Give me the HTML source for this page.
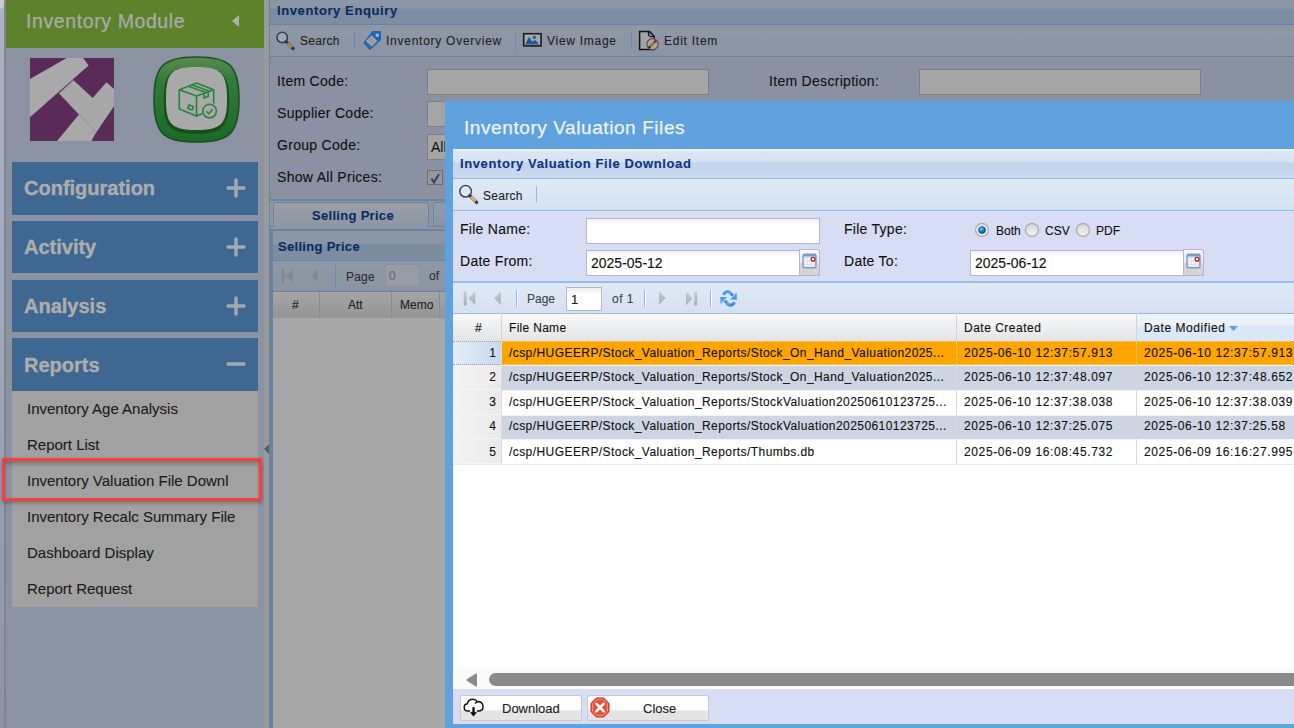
<!DOCTYPE html>
<html><head><meta charset="utf-8">
<style>
*{margin:0;padding:0;box-sizing:border-box}
html,body{width:1294px;height:728px;overflow:hidden;background:#a9b0c3;font-family:"Liberation Sans",sans-serif}
.a{position:absolute}
.t{position:absolute;white-space:nowrap;line-height:1;-webkit-text-stroke:0.12px currentColor}
</style></head><body>
<!-- left strip -->
<div class="a" style="left:0;top:0;width:4px;height:728px;background:linear-gradient(#abb2c6,#a3aabd 40%,#8c93a3)"></div>
<div class="a" style="left:4px;top:0;width:2px;height:728px;background:#7f848e"></div>
<div class="a" style="left:0;top:0;width:4px;height:9px;background:#cdcdcd;border-bottom-right-radius:4px 6px"></div>
<!-- sidebar -->
<div class="a" id="side" style="left:6px;top:0;width:258px;height:728px;background:#8b92a1">
  <div class="a" style="left:0;top:0;width:258px;height:48px;background:#5c822b"></div>
  <div class="t" style="left:20px;top:12px;font-size:19.5px;letter-spacing:0.6px;-webkit-text-stroke:0.25px #aaa;color:#aaa">Inventory Module</div>
  <svg class="a" style="left:226px;top:15px" width="7" height="12"><polygon points="7,0 7,12 0,6" fill="#b0b0b0"/></svg>
</div>
<!-- accordion headers -->
<div class="a" style="left:12px;top:162px;width:246px;height:53px;background:#3e6891"></div>
<div class="a" style="left:12px;top:221px;width:246px;height:52px;background:#3e6891"></div>
<div class="a" style="left:12px;top:280px;width:246px;height:52px;background:#3e6891"></div>
<div class="a" style="left:12px;top:338px;width:246px;height:53px;background:#3e6891"></div>
<div class="t" style="left:24px;top:178px;font-size:20px;font-weight:bold;letter-spacing:0px;-webkit-text-stroke:0.35px #adadad;color:#adadad">Configuration</div>
<div class="t" style="left:24px;top:237px;font-size:20px;font-weight:bold;letter-spacing:0px;-webkit-text-stroke:0.35px #adadad;color:#adadad">Activity</div>
<div class="t" style="left:24px;top:296px;font-size:20px;font-weight:bold;letter-spacing:0px;-webkit-text-stroke:0.35px #adadad;color:#adadad">Analysis</div>
<div class="t" style="left:24px;top:355px;font-size:20px;font-weight:bold;letter-spacing:0px;-webkit-text-stroke:0.35px #adadad;color:#adadad">Reports</div>
<!-- list -->
<div class="a" style="left:12px;top:391px;width:246px;height:216px;background:#a1a1a1"></div>
<div class="t" style="left:27px;top:401px;font-size:15px;color:#1c1c1c">Inventory Age Analysis</div>
<div class="t" style="left:27px;top:437px;font-size:15px;color:#1c1c1c">Report List</div>
<div class="t" style="left:27px;top:473px;font-size:15px;color:#1c1c1c">Inventory Valuation File Downl</div>
<div class="t" style="left:27px;top:509px;font-size:15px;color:#1c1c1c">Inventory Recalc Summary File</div>
<div class="t" style="left:27px;top:545px;font-size:15px;color:#1c1c1c">Dashboard Display</div>
<div class="t" style="left:27px;top:581px;font-size:15px;color:#1c1c1c">Report Request</div>
<!-- red highlight -->
<div class="a" style="left:2px;top:458px;width:260px;height:43px;border:3px solid #fb3d3d;box-shadow:inset 0 5px 5px -2px rgba(0,0,0,0.28),0 2px 4px rgba(0,0,0,0.3)"></div>
<!-- splitter -->
<div class="a" style="left:264px;top:0;width:5px;height:728px;background:#9a9a9a"></div>
<!-- main panel -->
<div class="a" id="main" style="left:269px;top:0;width:1025px;height:728px;background:#8a91a2;border-left:1px solid #6a82a3">
  <!-- header -->
  <div class="a" style="left:0;top:0;width:1025px;height:24px;background:linear-gradient(#8b97a7 0,#8a96a6 8px,#7b8ca1 9px,#7d8da2 24px)"></div>
  <div class="a" style="left:0;top:24px;width:1025px;height:1px;background:#6a83a4"></div>
  <div class="t" style="left:7px;top:4px;font-size:13px;font-weight:bold;letter-spacing:0.6px;color:#0b2c62">Inventory Enquiry</div>
  <!-- toolbar -->
  <div class="a" style="left:0;top:25px;width:1025px;height:31px;background:linear-gradient(#8f98a7,#8b94a3)"></div>
  <div class="a" style="left:0;top:56px;width:1025px;height:1px;background:#6a83a4"></div>
  <div class="t" style="left:30px;top:35px;font-size:12px;letter-spacing:0.3px;color:#232323">Search</div>
  <div class="a" style="left:84px;top:32px;width:1px;height:17px;background:#6b89b5"></div>
  <div class="t" style="left:116px;top:35px;font-size:12px;letter-spacing:0.74px;color:#232323">Inventory Overview</div>
  <div class="a" style="left:245px;top:32px;width:1px;height:17px;background:#6b89b5"></div>
  <div class="t" style="left:277px;top:35px;font-size:12px;letter-spacing:0.73px;color:#232323">View Image</div>
  <div class="a" style="left:361px;top:32px;width:1px;height:17px;background:#6b89b5"></div>
  <div class="t" style="left:394px;top:35px;font-size:12px;letter-spacing:0.75px;color:#232323">Edit Item</div>
  <!-- form -->
  <div class="t" style="left:7px;top:74px;font-size:14px;letter-spacing:0.3px;color:#111">Item Code:</div>
  <div class="t" style="left:7px;top:106px;font-size:14px;letter-spacing:0.3px;color:#111">Supplier Code:</div>
  <div class="t" style="left:7px;top:138px;font-size:14px;letter-spacing:0.3px;color:#111">Group Code:</div>
  <div class="t" style="left:7px;top:170px;font-size:14px;letter-spacing:0.3px;color:#111">Show All Prices:</div>
  <div class="t" style="left:499px;top:74px;font-size:14px;letter-spacing:0.3px;color:#111">Item Description:</div>
  <div class="a" style="left:157px;top:69px;width:282px;height:26px;background:#a5a5a5;border:1px solid #7f7f7f"></div>
  <div class="a" style="left:649px;top:69px;width:282px;height:26px;background:#a5a5a5;border:1px solid #7f7f7f"></div>
  <div class="a" style="left:157px;top:101px;width:282px;height:26px;background:#a5a5a5;border:1px solid #7f7f7f"></div>
  <div class="a" style="left:157px;top:134px;width:282px;height:26px;background:#a5a5a5;border:1px solid #7f7f7f"></div>
  <div class="t" style="left:161px;top:140px;font-size:14px;color:#161616">All</div>
  <div class="a" style="left:157px;top:170px;width:16px;height:15px;background:#979797;border:1px solid #6f6f6f"></div>
  <svg class="a" style="left:159px;top:172px" width="12" height="12"><path d="M2.5,6.5 L5,10.5 L10,2" stroke="#2a4278" stroke-width="2" fill="none"/></svg>
  <!-- form bottom border -->
  <div class="a" style="left:0;top:199px;width:1025px;height:2px;background:#6a83a4"></div>
  <!-- tab strip -->
  <div class="a" style="left:0;top:201px;width:1025px;height:30px;background:#8e96a5"></div>
  <div class="a" style="left:3px;top:202px;width:156px;height:25px;border:1px solid #6a83a4;border-bottom:none;border-radius:4px 4px 0 0;background:linear-gradient(#9a9fa6,#8e96a4)"></div>
  <div class="t" style="left:42px;top:209px;font-size:13px;font-weight:bold;letter-spacing:0.3px;color:#0b2c62">Selling Price</div>
  <div class="a" style="left:163px;top:202px;width:60px;height:25px;border:1px solid #6a83a4;border-bottom:none;border-radius:4px 4px 0 0;background:linear-gradient(#949cab,#8a93a3)"></div>
  <div class="a" style="left:0;top:226px;width:1025px;height:5px;background:#8e96a5;border-top:1px solid #6a83a4;border-bottom:2px solid #6a83a4"></div><div class="a" style="left:4px;top:226px;width:154px;height:3px;background:#8e96a4"></div>
  <!-- grid panel header -->
  <div class="a" style="left:2px;top:231px;width:1023px;height:29px;background:linear-gradient(#8b97a7 0,#8a96a6 13px,#7b8ca1 14px,#7d8da2 29px)"></div>
  <div class="a" style="left:2px;top:260px;width:1023px;height:1px;background:#6a83a4"></div>
  <div class="t" style="left:8px;top:240px;font-size:13px;font-weight:bold;letter-spacing:0.3px;color:#0b2c62">Selling Price</div>
  <!-- paging -->
  <div class="a" style="left:2px;top:261px;width:1023px;height:30px;background:linear-gradient(#8f98a7,#8b94a3)"></div>
  <div class="a" style="left:2px;top:291px;width:1023px;height:1px;background:#6a83a4"></div>
  <div class="t" style="left:76px;top:271px;font-size:12px;letter-spacing:0.2px;color:#2f2f2f">Page</div>
  <div class="a" style="left:115px;top:264px;width:35px;height:23px;border:1px solid #8c929c;background:#979ca6"></div>
  <div class="t" style="left:119px;top:270px;font-size:12px;color:#6d6d6d">0</div>
  <div class="t" style="left:159px;top:270px;font-size:12px;color:#2f2f2f">of</div>
  <div class="a" style="left:65px;top:265px;width:1px;height:22px;background:#6b89b5"></div>
  <!-- grid header -->
  <div class="a" style="left:2px;top:292px;width:1023px;height:26px;background:linear-gradient(#a5a5a5,#959595)"></div>
  <div class="a" style="left:49px;top:292px;width:1px;height:26px;background:#8a8a8a"></div>
  <div class="a" style="left:121px;top:292px;width:1px;height:26px;background:#8a8a8a"></div>
  <div class="a" style="left:169px;top:292px;width:1px;height:26px;background:#8a8a8a"></div>
  <div class="t" style="left:22px;top:299px;font-size:12px;color:#1e1e1e">#</div>
  <div class="t" style="left:78px;top:299px;font-size:12px;color:#1e1e1e">Att</div>
  <div class="t" style="left:130px;top:299px;font-size:12px;color:#1e1e1e">Memo</div>
  <!-- grid body -->
  <div class="a" style="left:2px;top:318px;width:1023px;height:410px;background:#a8a8a8"></div>
  <div class="a" style="left:0;top:231px;width:3px;height:497px;background:#6882a3"></div>
</div>
<!-- modal -->
<div class="a" id="win" style="left:445px;top:101px;width:860px;height:640px;background:#5fa2dd">
  <div class="t" style="left:19px;top:17px;font-size:19px;letter-spacing:0.58px;-webkit-text-stroke:0.25px #eef2f7;color:#eef2f7">Inventory Valuation Files</div>
  <!-- inner panel -->
  <div class="a" style="left:8px;top:48px;width:860px;height:574px;background:#fff">
    <!-- header -->
    <div class="a" style="left:0;top:0;width:860px;height:29px;background:linear-gradient(#f3f7fc 0,#f3f7fc 1px,#dbe6f5 2px,#d6e2f3 13px,#c3d4ee 14px,#c9d9f0 29px)"></div>
    <div class="a" style="left:0;top:29px;width:860px;height:1px;background:#99bbe8"></div>
    <div class="t" style="left:7px;top:8px;font-size:13px;font-weight:bold;letter-spacing:0.6px;color:#0c3781">Inventory Valuation File Download</div>
    <!-- toolbar -->
    <div class="a" style="left:0;top:30px;width:860px;height:31px;background:linear-gradient(#e0e9f6,#d5e1f1)"></div>
    <div class="a" style="left:0;top:61px;width:860px;height:1px;background:#99bbe8"></div>
    <div class="t" style="left:30px;top:41px;font-size:12px;letter-spacing:0.3px;color:#222">Search</div>
    <div class="a" style="left:83px;top:37px;width:1px;height:17px;background:#99bbe8"></div>
    <!-- form -->
    <div class="a" style="left:0;top:62px;width:860px;height:70px;background:#d6ddf5"></div>
    <div class="a" style="left:0;top:132px;width:860px;height:2px;background:#99bbe8"></div>
    <div class="t" style="left:7px;top:73px;font-size:14px;letter-spacing:0.27px;color:#111">File Name:</div>
    <div class="t" style="left:7px;top:105px;font-size:14px;letter-spacing:0.27px;color:#111">Date From:</div>
    <div class="t" style="left:391px;top:73px;font-size:14px;letter-spacing:0.27px;color:#111">File Type:</div>
    <div class="t" style="left:391px;top:105px;font-size:14px;letter-spacing:0.27px;color:#111">Date To:</div>
    <div class="a" style="left:133px;top:69px;width:234px;height:26px;background:linear-gradient(#f0f0f0,#fff 5px);border:1px solid #b5b8c8"></div>
    <div class="a" style="left:133px;top:101px;width:234px;height:26px;background:linear-gradient(#f0f0f0,#fff 5px);border:1px solid #b5b8c8"></div>
    <div class="a" style="left:517px;top:101px;width:234px;height:26px;background:linear-gradient(#f0f0f0,#fff 5px);border:1px solid #b5b8c8"></div>
    <div class="t" style="left:138px;top:107px;font-size:14px;color:#111">2025-05-12</div>
    <div class="t" style="left:522px;top:107px;font-size:14px;color:#111">2025-06-12</div>
    <div class="t" style="left:543px;top:76px;font-size:12px;color:#111">Both</div>
    <div class="t" style="left:592px;top:76px;font-size:12px;color:#111">CSV</div>
    <div class="t" style="left:643px;top:76px;font-size:12px;color:#111">PDF</div>
    <!-- paging -->
    <div class="a" style="left:0;top:134px;width:860px;height:30px;background:linear-gradient(#e0e9f6,#d5e1f1)"></div>
    <div class="a" style="left:0;top:164px;width:860px;height:1px;background:#99bbe8"></div>
    <div class="t" style="left:74px;top:144px;font-size:12px;color:#444">Page</div>
    <div class="a" style="left:113px;top:138px;width:36px;height:24px;background:linear-gradient(#eeeeee,#fff 6px);border:1px solid #b5b8c8"></div>
    <div class="t" style="left:118px;top:144px;font-size:13px;color:#111">1</div>
    <div class="t" style="left:159px;top:144px;font-size:12px;letter-spacing:0.5px;color:#444">of 1</div>
    <!-- grid header -->
    <div class="a" style="left:0;top:165px;width:860px;height:27px;background:linear-gradient(#f9f9f9,#e3e4e6)"></div>
    <div class="a" style="left:0;top:192px;width:860px;height:1px;background:#d0d0d0"></div>
    <div class="t" style="left:22px;top:173px;font-size:12px;color:#111">#</div>
    <div class="t" style="left:56px;top:173px;font-size:12px;letter-spacing:0.3px;color:#111">File Name</div>
    <div class="t" style="left:511px;top:173px;font-size:12px;letter-spacing:0.5px;color:#111">Date Created</div>
<!--ROWS-->
<div class="a" style="left:48px;top:192px;width:812px;height:24px;background:#ffa500;border-top:1px dotted #f3d79c;border-bottom:1px dotted #f3d79c"></div>
<div class="a" style="left:0;top:192px;width:48px;height:24px;background:linear-gradient(90deg,#e3ecf8,#c9d9ef);border-top:1px dotted #a0a0a0;border-bottom:1px dotted #a0a0a0"></div>
<div class="t" style="right:817px;top:198px;font-size:12px;color:#111">1</div>
<div class="t" style="left:56px;top:198px;font-size:12px;letter-spacing:0.43px;color:#111">/csp/HUGEERP/Stock_Valuation_Reports/Stock_On_Hand_Valuation2025...</div>
<div class="t" style="left:511px;top:198px;font-size:12px;letter-spacing:0.62px;color:#111">2025-06-10 12:37:57.913</div>
<div class="t" style="left:691px;top:198px;font-size:12px;letter-spacing:0.62px;color:#111">2025-06-10 12:37:57.913</div>
<div class="a" style="left:48px;top:216px;width:812px;height:25px;background:#cdd5e3;border-top:1px solid #eef1f6"></div>
<div class="a" style="left:0;top:216px;width:48px;height:25px;background:linear-gradient(90deg,#f3f3f3,#eaeaea);border-bottom:1px solid #f6f6f6"></div>
<div class="t" style="right:817px;top:222px;font-size:12px;color:#111">2</div>
<div class="t" style="left:56px;top:222px;font-size:12px;letter-spacing:0.43px;color:#111">/csp/HUGEERP/Stock_Valuation_Reports/Stock_On_Hand_Valuation2025...</div>
<div class="t" style="left:511px;top:222px;font-size:12px;letter-spacing:0.62px;color:#111">2025-06-10 12:37:48.097</div>
<div class="t" style="left:691px;top:222px;font-size:12px;letter-spacing:0.62px;color:#111">2025-06-10 12:37:48.652</div>
<div class="a" style="left:48px;top:241px;width:812px;height:25px;background:#ffffff;border-top:1px solid #f4f4f4"></div>
<div class="a" style="left:0;top:241px;width:48px;height:25px;background:linear-gradient(90deg,#f3f3f3,#eaeaea);border-bottom:1px solid #f6f6f6"></div>
<div class="t" style="right:817px;top:247px;font-size:12px;color:#111">3</div>
<div class="t" style="left:56px;top:247px;font-size:12px;letter-spacing:0.43px;color:#111">/csp/HUGEERP/Stock_Valuation_Reports/StockValuation20250610123725...</div>
<div class="t" style="left:511px;top:247px;font-size:12px;letter-spacing:0.62px;color:#111">2025-06-10 12:37:38.038</div>
<div class="t" style="left:691px;top:247px;font-size:12px;letter-spacing:0.62px;color:#111">2025-06-10 12:37:38.039</div>
<div class="a" style="left:48px;top:266px;width:812px;height:24px;background:#cdd5e3;border-top:1px solid #eef1f6"></div>
<div class="a" style="left:0;top:266px;width:48px;height:24px;background:linear-gradient(90deg,#f3f3f3,#eaeaea);border-bottom:1px solid #f6f6f6"></div>
<div class="t" style="right:817px;top:271px;font-size:12px;color:#111">4</div>
<div class="t" style="left:56px;top:271px;font-size:12px;letter-spacing:0.43px;color:#111">/csp/HUGEERP/Stock_Valuation_Reports/StockValuation20250610123725...</div>
<div class="t" style="left:511px;top:271px;font-size:12px;letter-spacing:0.62px;color:#111">2025-06-10 12:37:25.075</div>
<div class="t" style="left:691px;top:271px;font-size:12px;letter-spacing:0.62px;color:#111">2025-06-10 12:37:25.58</div>
<div class="a" style="left:48px;top:290px;width:812px;height:25px;background:#ffffff;border-top:1px solid #f4f4f4"></div>
<div class="a" style="left:0;top:290px;width:48px;height:25px;background:linear-gradient(90deg,#f3f3f3,#eaeaea);border-bottom:1px solid #f6f6f6"></div>
<div class="t" style="right:817px;top:297px;font-size:12px;color:#111">5</div>
<div class="t" style="left:56px;top:297px;font-size:12px;letter-spacing:0.43px;color:#111">/csp/HUGEERP/Stock_Valuation_Reports/Thumbs.db</div>
<div class="t" style="left:511px;top:297px;font-size:12px;letter-spacing:0.62px;color:#111">2025-06-09 16:08:45.732</div>
<div class="t" style="left:691px;top:297px;font-size:12px;letter-spacing:0.62px;color:#111">2025-06-09 16:16:27.995</div>
<!--/ROWS-->
    <!-- bottom toolbar -->
    <div class="a" style="left:0;top:540px;width:860px;height:35px;background:#d6ddf5"></div>
  </div>
</div>
<!-- ICONS LAYER (page coords) -->
<!-- accordion plus/minus -->
<svg class="a" style="left:226px;top:178px" width="20" height="20" viewBox="0 0 20 20"><path d="M10,2 V18 M2,10 H18" stroke="#a3a9b0" stroke-width="3.4" stroke-linecap="round"/></svg>
<svg class="a" style="left:226px;top:237px" width="20" height="20" viewBox="0 0 20 20"><path d="M10,2 V18 M2,10 H18" stroke="#a3a9b0" stroke-width="3.4" stroke-linecap="round"/></svg>
<svg class="a" style="left:226px;top:296px" width="20" height="20" viewBox="0 0 20 20"><path d="M10,2 V18 M2,10 H18" stroke="#a3a9b0" stroke-width="3.4" stroke-linecap="round"/></svg>
<svg class="a" style="left:226px;top:354px" width="20" height="20" viewBox="0 0 20 20"><path d="M2,10 H18" stroke="#a3a9b0" stroke-width="3.4" stroke-linecap="round"/></svg>
<!-- logo 1 -->
<svg class="a" style="left:30px;top:58px" width="84" height="83" viewBox="73 60 612 602" preserveAspectRatio="none">
  <rect x="73" y="60" width="612" height="602" fill="#5a2b58"/>
  <path d="M73,212 L340,60 L460,60 L500,115 L73,490 Z" fill="#a9a9a9"/>
  <path d="M285,318 L390,222 L530,350 L630,235 L685,285 L685,410 L555,600 L430,470 Z" fill="#a8a8a8"/>
  <path d="M270,662 L430,470 L555,600 L520,662 Z" fill="#a9a9a9"/>
  <path d="M285,318 L390,222" stroke="#8f8f8f" stroke-width="8"/>
  <path d="M430,470 L555,600" stroke="#9a9a9a" stroke-width="6"/>
</svg>
<!-- logo 2 -->
<svg class="a" style="left:152px;top:55px" width="89" height="89" viewBox="0 0 89 89">
  <defs>
    <radialGradient id="gr" cx="0.5" cy="0.45" r="0.6"><stop offset="0.6" stop-color="#2f7a36"/><stop offset="0.85" stop-color="#1e6a2a"/><stop offset="1" stop-color="#175a22"/></radialGradient>
    <linearGradient id="gr2" x1="0" x2="0" y1="0" y2="1"><stop offset="0" stop-color="#5a8a50"/><stop offset="0.3" stop-color="#2f7a36"/><stop offset="1" stop-color="#1c6a28"/></linearGradient>
  </defs>
  <path d="M44.5,2 C78,2 87,11 87,44.5 C87,78 78,87 44.5,87 C11,87 2,78 2,44.5 C2,11 11,2 44.5,2 Z" fill="url(#gr2)" stroke="#1f4f24" stroke-width="1.6"/>
  <path d="M44.5,12 C68,12 76,17 76,44.5 C76,70 68,76 44.5,76 C19,76 13,70 13,44.5 C13,17 19,12 44.5,12 Z" fill="#0f3a14" opacity="0.6" transform="translate(44.5 46) scale(1.04) translate(-44.5 -44.5)"/>
  <path d="M44.5,12 C69,12 75,18 75,44.5 C75,69 69,75 44.5,75 C19,75 14,69 14,44.5 C14,18 19,12 44.5,12 Z" fill="#a9a9a9"/>
  <g fill="none" stroke="#28843a" stroke-width="1.6" stroke-linejoin="round">
    <path d="M27.3,34.8 L44.5,28 L61.7,34.8 L44.5,41 Z"/>
    <path d="M27.3,34.8 L27.3,54.1 L44.5,60.9 L44.5,41"/>
    <path d="M61.7,34.8 L61.7,48.6"/>
    <path d="M37,31.4 L54.1,37.6 M40.4,30 L57.6,36.2"/>
    <path d="M52,38.3 L52,43 L56.2,41.6 L56.2,36.8"/>
    <rect x="36.3" y="50.6" width="4.7" height="3.6" transform="rotate(22 38.6 52.4)"/>
    <path d="M44.5,60.9 L50.5,58.6"/>
    <circle cx="57.6" cy="56.1" r="6.8"/>
    <path d="M54.2,56.2 L56.7,58.7 L61,54"/>
  </g>
</svg>

<!-- main toolbar search icon (masked) -->
<svg class="a" style="left:274px;top:30px" width="22" height="22" viewBox="0 0 22 22">
  <circle cx="8.2" cy="7.4" r="5.2" fill="#a3a7ae" stroke="#34405a" stroke-width="1.6"/>
  <line x1="12.2" y1="11.6" x2="19.2" y2="18.6" stroke="#2c3650" stroke-width="3.2" stroke-linecap="round"/>
  <line x1="13.6" y1="13" x2="17.9" y2="17.3" stroke="#b08a58" stroke-width="2.6" stroke-linecap="butt"/>
</svg>
<!-- tag icon -->
<svg class="a" style="left:362px;top:30px" width="21" height="21" viewBox="0 0 21 21">
  <path d="M10.3,1 L19,1 L19,10.1 L8.6,19.6 Q8,20.2 7.4,19.6 L1.6,13.6 Q1,13 1.6,12.4 Z" fill="#1d66b8"/>
  <rect x="5.6" y="7" width="8" height="8" transform="rotate(45 9.6 11)" fill="#a2a2a2"/>
  <line x1="7" y1="9.5" x2="11" y2="13.5" stroke="#8a8a8a" stroke-width="0.8"/>
  <line x1="8.2" y1="8.3" x2="12.2" y2="12.3" stroke="#8a8a8a" stroke-width="0.8"/>
  <rect x="13.6" y="3.6" width="3.2" height="3.2" fill="#b4b4b4"/>
</svg>
<!-- view image icon -->
<svg class="a" style="left:522px;top:32px" width="21" height="16" viewBox="0 0 21 16">
  <rect x="1.7" y="1.7" width="17.4" height="12.2" fill="#a6a7a9" stroke="#1c1c1c" stroke-width="1.6"/>
  <path d="M3.2,12.6 L6.6,5.6 Q7,5 7.5,5.6 L10,9.4 L12.2,8.4 Q13,8.1 13.8,8.6 L17.2,12.6 Z" fill="#1d5898"/>
  <circle cx="12.3" cy="5.3" r="1.6" fill="#1d5898"/>
</svg>
<!-- edit icon -->
<svg class="a" style="left:638px;top:30px" width="22" height="21" viewBox="0 0 22 21">
  <path d="M1.6,1.6 L11.5,1.6 L16.2,6.2 L16.2,19.6 L1.6,19.6 Z" fill="#a4a5a8" stroke="#141414" stroke-width="1.5"/>
  <path d="M11,1.6 Q9.5,4.5 11.5,6 Q13.5,7.2 16.2,6.2" fill="none" stroke="#141414" stroke-width="1.3"/>
  <circle cx="14.5" cy="14.2" r="5.6" fill="#a8a8aa" stroke="#5d4c4e" stroke-width="1.2"/>
  <line x1="11.2" y1="17.4" x2="16.6" y2="12" stroke="#9a6a1e" stroke-width="2.2"/>
  <circle cx="17.1" cy="11.5" r="1.5" fill="#b51d1d"/>
  <line x1="10.8" y1="17.8" x2="12" y2="16.6" stroke="#141414" stroke-width="2"/>
</svg>
<!-- paging icons main (masked) -->
<svg class="a" style="left:280px;top:268px" width="40" height="16" viewBox="0 0 40 16">
  <rect x="1.5" y="1" width="3" height="14" fill="#83888f"/>
  <path d="M13,1 L13,15 L6,8 Z" fill="#83888f"/>
  <path d="M38,1 L38,14 L31,7.5 Z" fill="#83888f"/>
</svg>
<!-- splitter collapse triangle -->
<svg class="a" style="left:264px;top:444px" width="5" height="10"><path d="M5,0 L5,10 L0,5 Z" fill="#5c5c5c"/></svg>
<!-- modal toolbar search icon -->
<svg class="a" style="left:457px;top:183px" width="22" height="22" viewBox="0 0 22 22">
  <circle cx="8.6" cy="8.3" r="5.8" fill="#e3e6ec" stroke="#3b4a6b" stroke-width="1.5"/>
  <line x1="12.8" y1="12.6" x2="19.6" y2="19.4" stroke="#34415e" stroke-width="3.4" stroke-linecap="round"/>
  <line x1="14" y1="13.8" x2="18.4" y2="18.2" stroke="#e3b06a" stroke-width="3"/>
</svg>
<!-- modal paging icons -->
<svg class="a" style="left:462px;top:290px" width="42" height="17" viewBox="0 0 42 17">
  <defs><linearGradient id="pg" x1="0" x2="0" y1="0" y2="1"><stop offset="0" stop-color="#c9ccd1"/><stop offset="1" stop-color="#a9adb3"/></linearGradient></defs>
  <rect x="1.7" y="1.3" width="3" height="14.3" rx="0.8" fill="url(#pg)"/>
  <path d="M13.3,1.3 L13.3,15.3 L6.5,8.3 Z" fill="url(#pg)"/>
  <path d="M39,1.3 L39,15 L32,8.2 Z" fill="url(#pg)"/>
</svg>
<svg class="a" style="left:657px;top:290px" width="42" height="17" viewBox="0 0 42 17">
  <path d="M2,1.3 L2,14.5 L9,8 Z" fill="url(#pg)"/>
  <path d="M29,1.5 L29,15.5 L35.4,8.5 Z" fill="url(#pg)"/>
  <rect x="37.2" y="1.5" width="3" height="14" rx="0.8" fill="url(#pg)"/>
</svg>
<!-- separators modal paging -->
<div class="a" style="left:516px;top:290px;width:1px;height:17px;background:#8cb6ef;box-shadow:1px 0 0 #fff"></div>
<div class="a" style="left:644px;top:290px;width:1px;height:17px;background:#8cb6ef;box-shadow:1px 0 0 #fff"></div>
<div class="a" style="left:710px;top:290px;width:1px;height:17px;background:#8cb6ef;box-shadow:1px 0 0 #fff"></div>
<!-- refresh icon -->
<svg class="a" style="left:716px;top:286px" width="26" height="26" viewBox="0 0 728 728">
  <defs><linearGradient id="rf" x1="0" x2="1" y1="0" y2="1"><stop offset="0" stop-color="#3a8fe6"/><stop offset="0.5" stop-color="#5aaaf2"/><stop offset="1" stop-color="#2a7bd8"/></linearGradient></defs>
  <path d="M205,250 Q320,70 470,265" fill="none" stroke="url(#rf)" stroke-width="85"/>
  <path d="M390,375 L580,375 L580,185 Z" fill="url(#rf)"/>
  <path d="M250,410 Q390,640 520,450" fill="none" stroke="url(#rf)" stroke-width="85"/>
  <path d="M125,305 L315,305 L125,505 Z" fill="url(#rf)"/>
</svg>
<!-- calendar triggers -->
<div class="a" style="left:799px;top:249px;width:21px;height:27px;border:1px solid #b5b8c8;border-radius:0 3px 3px 0;background:linear-gradient(#f7f7f7,#ececec 50%,#d8d8d8 51%,#d4d4d4)"></div>
<div class="a" style="left:1183px;top:249px;width:21px;height:27px;border:1px solid #b5b8c8;border-radius:0 3px 3px 0;background:linear-gradient(#f7f7f7,#ececec 50%,#d8d8d8 51%,#d4d4d4)"></div>
<svg class="a" style="left:802px;top:253px" width="15" height="16" viewBox="0 0 15 16">
  <rect x="1" y="1.2" width="13" height="13.6" rx="1.5" fill="#dcdde0" stroke="#7b9cca" stroke-width="1.4"/>
  <rect x="1" y="1.2" width="13" height="2.2" fill="#7b9cca"/>
  <g fill="#f4f4f4"><rect x="2.6" y="5" width="2.6" height="2.6"/><rect x="6.2" y="5" width="2.6" height="2.6"/><rect x="2.6" y="8.6" width="2.6" height="2.6"/><rect x="6.2" y="8.6" width="2.6" height="2.6"/><rect x="9.8" y="8.6" width="2.6" height="2.6"/><rect x="2.6" y="12" width="2.6" height="1.6"/><rect x="6.2" y="12" width="2.6" height="1.6"/><rect x="9.8" y="12" width="2.6" height="1.6"/></g>
  <circle cx="11.1" cy="6.3" r="1.9" fill="#fff" stroke="#b01c28" stroke-width="1.3"/>
</svg>
<svg class="a" style="left:1186px;top:253px" width="15" height="16" viewBox="0 0 15 16">
  <rect x="1" y="1.2" width="13" height="13.6" rx="1.5" fill="#dcdde0" stroke="#7b9cca" stroke-width="1.4"/>
  <rect x="1" y="1.2" width="13" height="2.2" fill="#7b9cca"/>
  <g fill="#f4f4f4"><rect x="2.6" y="5" width="2.6" height="2.6"/><rect x="6.2" y="5" width="2.6" height="2.6"/><rect x="2.6" y="8.6" width="2.6" height="2.6"/><rect x="6.2" y="8.6" width="2.6" height="2.6"/><rect x="9.8" y="8.6" width="2.6" height="2.6"/><rect x="2.6" y="12" width="2.6" height="1.6"/><rect x="6.2" y="12" width="2.6" height="1.6"/><rect x="9.8" y="12" width="2.6" height="1.6"/></g>
  <circle cx="11.1" cy="6.3" r="1.9" fill="#fff" stroke="#b01c28" stroke-width="1.3"/>
</svg>
<!-- radios -->
<svg class="a" style="left:974px;top:222px" width="16" height="16" viewBox="0 0 16 16">
  <defs><radialGradient id="rb" cx="0.4" cy="0.35" r="0.6"><stop offset="0" stop-color="#6fd0ff"/><stop offset="0.5" stop-color="#1f8fd0"/><stop offset="1" stop-color="#0d4f86"/></radialGradient>
  <linearGradient id="rg" x1="0" x2="0" y1="0" y2="1"><stop offset="0" stop-color="#d6d6d6"/><stop offset="1" stop-color="#f4f4f4"/></linearGradient></defs>
  <circle cx="8" cy="8" r="6.5" fill="#ececec" stroke="#b0b0b0" stroke-width="1.4"/>
  <circle cx="8" cy="8" r="3.5" fill="url(#rb)" stroke="#0f4a7e" stroke-width="0.6"/>
</svg>
<svg class="a" style="left:1024px;top:222px" width="16" height="16" viewBox="0 0 16 16">
  <circle cx="8" cy="8" r="6.5" fill="url(#rg)" stroke="#b0b0b0" stroke-width="1.4"/>
</svg>
<svg class="a" style="left:1075px;top:222px" width="16" height="16" viewBox="0 0 16 16">
  <circle cx="8" cy="8" r="6.5" fill="url(#rg)" stroke="#b0b0b0" stroke-width="1.4"/>
</svg>
<!-- modal grid column lines -->
<div class="a" style="left:501px;top:313px;width:1px;height:28px;background:#d5d5d5"></div>
<div class="a" style="left:956px;top:313px;width:1px;height:28px;background:#d5d5d5"></div>
<div class="a" style="left:1136px;top:313px;width:1px;height:28px;background:#d5d5d5"></div>
<div class="a" style="left:501px;top:341px;width:1px;height:123px;background:#dcdcdc"></div>
<div class="a" style="left:956px;top:365px;width:1px;height:99px;background:#d8d8d8"></div><div class="a" style="left:956px;top:342px;width:0;height:22px;border-left:1px dotted #f3d79c"></div>
<div class="a" style="left:1136px;top:365px;width:1px;height:99px;background:#d8d8d8"></div><div class="a" style="left:1136px;top:342px;width:0;height:22px;border-left:1px dotted #f3d79c"></div>
<div class="a" style="left:453px;top:464px;width:841px;height:1px;background:#ededed"></div>
<!-- date modified header highlight -->
<div class="a" style="left:1137px;top:314px;width:157px;height:27px;background:linear-gradient(#eef4fc 0,#eaf1fb 11px,#dde9f8 12px,#dae7f8)"></div>
<svg class="a" style="left:1229px;top:326px" width="10" height="6"><path d="M0,0 L9,0 L4.5,5 Z" fill="#6f98d6"/></svg>
<div class="t" style="left:1144px;top:322px;font-size:12px;letter-spacing:0.57px;color:#111">Date Modified</div>
<!-- scrollbar -->
<div class="a" style="left:455px;top:668px;width:839px;height:21px;background:#fafafa"></div>
<svg class="a" style="left:465px;top:672px" width="13" height="16" viewBox="0 0 13 16"><path d="M11,1.5 Q12,1 12,2.5 L12,13.5 Q12,15 11,14.5 L1.8,8.8 Q1,8 1.8,7.2 Z" fill="#8a8a8a"/></svg>
<div class="a" style="left:489px;top:673px;width:830px;height:13px;border-radius:7px;background:#8a8a8a"></div>
<!-- buttons -->
<div class="a" style="left:460px;top:695px;width:122px;height:26px;border:1px solid #c9c9c9;border-radius:3px 3px 0 0;background:linear-gradient(#ffffff 0,#fbfbfb 14px,#e4e4e4 15px,#e4e4e4)"></div>
<div class="a" style="left:587px;top:695px;width:122px;height:26px;border:1px solid #c9c9c9;border-radius:3px 3px 0 0;background:linear-gradient(#ffffff 0,#fbfbfb 14px,#e4e4e4 15px,#e4e4e4)"></div>
<div class="t" style="left:502px;top:702px;font-size:13px;color:#222">Download</div>
<div class="t" style="left:643px;top:702px;font-size:13px;color:#222">Close</div>
<svg class="a" style="left:463px;top:698px" width="22" height="20" viewBox="0 0 22 20">
  <path d="M7,13 L5,13 Q1.2,13 1.2,9.4 Q1.2,6.2 4.3,5.8 Q5.2,1.2 9.8,1.2 Q12.7,1.2 14.3,3.6 L15.5,3.4 Q19.8,3.8 20,8.4 Q20,13 15.5,13 L14,13" fill="none" stroke="#111" stroke-width="1.5"/>
  <path d="M14.3,3.6 Q12.6,4.6 12.2,5.6" fill="none" stroke="#111" stroke-width="1.5"/>
  <line x1="10.5" y1="9.2" x2="10.5" y2="15" stroke="#000" stroke-width="2.2"/>
  <path d="M7,14.2 L14,14.2 L10.5,18.5 Z" fill="#000"/>
</svg>
<svg class="a" style="left:590px;top:697px" width="20" height="21" viewBox="0 0 20 21">
  <path d="M6.3,1 L13.7,1 L19,6.3 L19,14.7 L13.7,20 L6.3,20 L1,14.7 L1,6.3 Z" fill="#e4503b" stroke="#c93a2a" stroke-width="1"/>
  <path d="M6.9,2.6 L13.1,2.6 L17.4,6.9 L17.4,14.1 L13.1,18.4 L6.9,18.4 L2.6,14.1 L2.6,6.9 Z" fill="none" stroke="#f59a86" stroke-width="0.9"/>
  <line x1="6.5" y1="6.8" x2="13.5" y2="14.2" stroke="#fff" stroke-width="2.6" stroke-linecap="round"/>
  <line x1="13.5" y1="6.8" x2="6.5" y2="14.2" stroke="#fff" stroke-width="2.6" stroke-linecap="round"/>
</svg>
</body></html>
